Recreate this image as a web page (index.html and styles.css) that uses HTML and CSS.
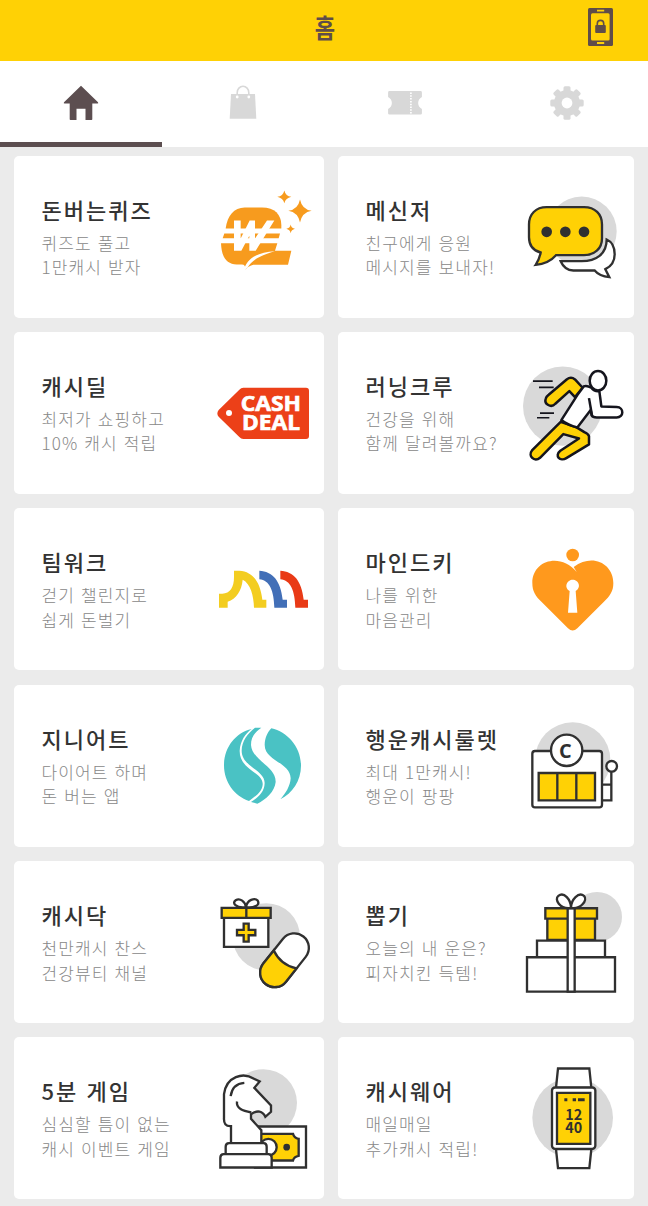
FILE: index.html
```html
<!DOCTYPE html>
<html lang="ko">
<head>
<meta charset="utf-8">
<title>홈</title>
<link rel="stylesheet" href="styles.css">
</head>
<body>
<header class="topbar">
  <h1 class="topbar-title">홈</h1>
  <svg class="phone" viewBox="0 0 25 38">
    <rect width="25" height="38" rx="1.5" fill="#5f4d49"/>
    <rect x="3" y="5.2" width="18.6" height="27.3" rx="1.5" fill="#ffd105"/>
    <path d="M9 2.6h7.2M9 35h7.2" stroke="#ffd105" stroke-width="1.9"/>
    <path d="M9.3 18v-2.4a3.2 3.2 0 0 1 6.4 0V18" fill="none" stroke="#5f4d49" stroke-width="1.6"/>
    <rect x="7.2" y="17" width="10.6" height="8" rx="1" fill="#5f4d49"/>
  </svg>
</header>
<nav class="tabs">
  <a class="tab tab-active"><svg class="tab-icon" viewBox="0 0 36 36"><path fill="#5c4e50" d="M18 .8 1 17.2q-.8 1.2.6 1.3H6.7v15.8q0 .7.8.7h6V23.800h9V35h6q.8 0 .8-.7V18.500h5.100q1.400-.1.6-1.300Z"/></svg></a>
  <a class="tab"><svg class="tab-icon" viewBox="0 0 36 36"><path fill="none" stroke="#d8d8d8" stroke-width="1.6" d="M12.200 12V7.700a5.800 6.500 0 0 1 11.600 0V12"/><path fill="#d8d8d8" d="M6 9h24l1.300 24.700H4.700Z"/><circle cx="12.200" cy="12" r="1.400" fill="#fff"/><circle cx="23.800" cy="12" r="1.400" fill="#fff"/></svg></a>
  <a class="tab"><svg class="tab-icon" viewBox="0 0 36 36"><path fill="#d8d8d8" d="M2.500 6h31q1.400 0 1.400 1.400v4.500c-5 2.500-5 9.500 0 12v4.500q0 1-1.400 1h-31q-1.400 0-1.400-1v-4.500c5-2.500 5-9.500 0-12V7.400Q1.100 6 2.500 6Z"/><path d="M23.900 7.500V30" stroke="#fff" stroke-width="1.700" stroke-dasharray="1.500 1.300"/></svg></a>
  <a class="tab"><svg class="tab-icon" viewBox="-18 -18 36 36"><g fill="#d8d8d8"><circle r="13"/><g id="teeth"><rect x="-3.500" y="-16.700" width="7" height="33.400" rx="1.500"/><rect x="-16.700" y="-3.500" width="33.400" height="7" rx="1.500"/></g><use href="#teeth" transform="rotate(45)"/></g><circle r="5.400" fill="#fff"/></svg></a>
</nav>
<main class="grid">
  <section class="card">
    <div class="copy"><h2 class="title">돈버는퀴즈</h2><p class="desc">퀴즈도 풀고<br>1만캐시 받자</p></div>
    <svg class="art" viewBox="12 -43.5 360 486">
      <g fill="#f79b1e">
        <path d="M134 111H186C224 111 244 132 244 164V174H77C82 136 102 111 134 111Z"/>
        <path d="M73 189H240L236 203H68Z"/>
        <path d="M63 218H232L225 241H274L264 283H160C151 285 143 290 136 297C137 288 134 281 124 282H110C80 280 65 262 63 218Z"/>
        <path d="M253 60Q257 77 274 79 257 83 253 98 249 83 232 79 249 77 253 60Z"/>
        <path d="M300 87Q306 117 335 121 306 126 300 156 294 126 265 121 294 117 300 87Z"/>
        <path d="M272 162Q274 173 285 175 274 178 272 188 270 178 259 175 270 173 272 162Z"/>
      </g>
      <path d="M132 299C138 266 172 244 225 242C187 252 155 268 143 291Z" fill="#fff"/>
      <path d="M102 150H122V204L149 150H165V204L201 150H223L167 241H148V196L124 241H102Z" fill="#fff"/>
    </svg>
  </section>
  <section class="card">
    <div class="copy"><h2 class="title">메신저</h2><p class="desc">친구에게 응원<br>메시지를 보내자!</p></div>
    <svg class="art line" viewBox="12 -73.5 360 486">
      <circle class="disc" cx="215" cy="153" r="105"/>
      <path fill="#fff" d="M152 242H215C258 242 290 221 290 177C306 184 314 201 314 221C314 240 306 256 286 266L298 290C280 288 264 282 254 270H190C174 269 161 263 152 242Z"/>
      <path class="yel" d="M110 80H222C255 80 276 101 276 132V173C276 203 255 224 222 224H138C125 239 106 250 77 253Q88 237 92 216C70 210 57 193 57 170V132C57 101 77 80 110 80Z"/>
      <g fill="#303030" stroke="none"><circle cx="110" cy="154" r="16"/><circle cx="166" cy="154" r="16"/><circle cx="222" cy="154" r="16"/></g>
    </svg>
  </section>

  <section class="card">
    <div class="copy"><h2 class="title">캐시딜</h2><p class="desc">최저가 쇼핑하고<br>10% 캐시 적립</p></div>
    <svg class="art" viewBox="12 -84.3 360 486">
      <path d="M130 83H318Q327 83 327 92V228Q327 237 318 237H130Q123 237 118 231L56 170Q48 160 56 150L118 89Q123 83 130 83Z" fill="#ec4018"/>
      <circle cx="87" cy="159" r="9" fill="#fff"/>
      <text class="tagtext"><tspan x="122" y="154" textLength="181" lengthAdjust="spacingAndGlyphs">CASH</tspan><tspan x="126" y="211" textLength="174" lengthAdjust="spacingAndGlyphs">DEAL</tspan></text>
    </svg>
  </section>
  <section class="card">
    <div class="copy"><h2 class="title">러닝크루</h2><p class="desc">건강을 위해<br>함께 달려볼까요?</p></div>
    <svg class="art run" viewBox="12 -69.3 360 486">
      <circle class="disc" cx="158" cy="153" r="119"/>
      <path d="M69 78H128M87 97H131M90 174H132M81 188H118" stroke-width="5"/>
      <path class="yel" d="M218 98L195 126 178 108 136 146C123 160 102 147 107 131Q108 125 116 119L170 73Q183 63 195 73Z"/>
      <path class="yel" d="M152 200L66 286C53 302 73 323 90 308L160 237 207 250 151 287C132 302 151 321 169 309L237 268V243Q235 236 223 231L200 217Z"/>
      <path fill="#fff" d="M221 94L202 120 154 195Q174 211 202 217L242 165 245 181Q248 187 260 187H320C342 187 343 157 320 156L274 154 268 108Q253 110 244 98 230 90 221 94Z"/>
      <path d="M237 129L246 181"/><ellipse cx="264" cy="77" rx="25" ry="29" fill="#fff"/>
    </svg>
  </section>

  <section class="card">
    <div class="copy"><h2 class="title">팀워크</h2><p class="desc">걷기 챌린지로<br>쉽게 돈벌기</p></div>
    <svg class="art" viewBox="-3 -95.1 360 486">
      <path fill="#f3cd20" d="M42 162H52C75 161 87 144 87 112V93H103C142 95 166 126 172 180H184V204H147C146 169 137 132 113 120C110 153 94 178 68 186V204H42Z"/>
      <path fill="#426fb7" d="M163 93C203 95 227 123 233 180H246V204H208C207 155 194 121 163 119Z"/>
      <path fill="#e93a16" d="M226 93C266 95 290 123 296 180H309V204H271C270 155 257 121 226 119Z"/>
    </svg>
  </section>
  <section class="card">
    <div class="copy"><h2 class="title">마인드키</h2><p class="desc">나를 위한<br>마음관리</p></div>
    <svg class="art" viewBox="-3 -80.1 360 486">
      <circle cx="173" cy="61" r="19" fill="#ff991d"/>
      <path fill="#ff991d" d="M185 112L176 97C233 54 295 88 295 145C295 170 285 184 266 202L187 281Q173 294 159 281L80 202C61 184 52 170 52 145C52 76 137 53 185 112Z"/>
      <path fill="#fff" d="M164 169C145 157 157 135 173 135C190 135 201 157 182 169L187 234H159Z"/>
    </svg>
  </section>

  <section class="card">
    <div class="copy"><h2 class="title">지니어트</h2><p class="desc">다이어트 하며<br>돈 버는 앱</p></div>
    <svg class="art" viewBox="-3 -75.9 360 486">
      <g fill="#4ac2c4">
        <path d="M140 56C91 67 57 112 57 165C57 216 89 258 132 272C151 258 171 245 173 223C176 184 103 181 104 121C106 91 121 70 140 56Z"/>
        <path d="M150 52H169C145 68 138 86 138 104C141 151 213 167 212 215C209 244 184 267 157 280L138 275C158 262 178 247 179 218C178 178 110 169 110 121C110 92 128 70 150 52Z"/>
        <path d="M199 54C248 65 288 110 288 166C288 211 262 249 226 267C242 250 256 226 257 204C255 155 179 152 179 103C180 83 186 68 199 54Z"/>
      </g>
    </svg>
  </section>
  <section class="card">
    <div class="copy"><h2 class="title">행운캐시룰렛</h2><p class="desc">최대 1만캐시!<br>행운이 팡팡</p></div>
    <svg class="art line" viewBox="-3 -75.9 360 486">
      <circle class="disc" cx="173" cy="149" r="113"/>
      <path fill="#fff" d="M262 223H289V270H262M289 185V223"/>
      <rect x="52" y="122" width="209" height="169" rx="8" fill="#fff"/>
      <circle cx="155" cy="120" r="47" fill="#fff"/>
      <circle cx="290" cy="168" r="16" fill="#fff"/>
      <path class="yel" d="M71 188H240V270H71ZM127 188V270M184 188V270"/>
      <text x="132" y="142" class="coin" textLength="38" lengthAdjust="spacingAndGlyphs">C</text>
    </svg>
  </section>

  <section class="card">
    <div class="copy"><h2 class="title">캐시닥</h2><p class="desc">천만캐시 찬스<br>건강뷰티 채널</p></div>
    <svg class="art line" viewBox="-3 -71.7 360 486">
      <circle class="disc" cx="184" cy="156" r="101"/>
      <path fill="#fff" d="M57 99H190V186H57Z"/><path class="yel" d="M50 69H197V99H50Z"/>
      <path fill="#fff" d="M123 67C92 71 80 54 92 46C105 38 121 50 123 67C126 44 150 38 158 47C167 62 145 70 123 67Z"/><path d="M124 66V99"/>
      <path class="yel" d="M116 116H131V135H151V151H131V170H116V151H96V135H116Z"/>
      <g transform="rotate(38.500 238.500 226)"><rect x="195" y="135" width="87" height="182" rx="43.500" fill="#fff"/><path class="yel" d="M195 223Q238 244 282 223V273.500A43.500 43.500 0 0 1 195 273.500Z"/></g>
    </svg>
  </section>
  <section class="card">
    <div class="copy"><h2 class="title">뽑기</h2><p class="desc">오늘의 내 운은?<br>피자치킨 득템!</p></div>
    <svg class="art line" viewBox="-3 -71.7 360 486">
      <circle class="disc" cx="246" cy="96" r="75"/>
      <path fill="#fff" d="M66 167H270V217H66ZM36 217H300V320H36Z"/>
      <path class="yel" d="M97 101H240V165H97ZM91 70H246V101H91Z"/>
      <path fill="#fff" d="M158 70H179V320H158Z"/>
      <path fill="#fff" d="M168 69C134 74 117 43 130 33C147 20 168 44 168 69C168 44 191 20 207 33C219 45 198 74 168 69Z"/>
    </svg>
  </section>

  <section class="card">
    <div class="copy"><h2 class="title">5분 게임</h2><p class="desc">심심할 틈이 없는<br>캐시 이벤트 게임</p></div>
    <svg class="art line" viewBox="-3 -55.5 360 486">
      <circle class="disc" cx="175" cy="142" r="101"/>
      <path fill="#fff" d="M150 213H303V336H150Z"/>
      <path class="yel" d="M150 235H264Q267 248 281 250V301Q267 303 264 315H150Z"/>
      <circle cx="190" cy="275" r="25" fill="#fff"/><circle cx="245" cy="275" r="10" fill="#303030" stroke="none"/>
      <path fill="#fff" d="M78 263V212C62 213 56 204 57 187V116C64 62 115 49 147 70L164 78 148 97 198 150V169L181 184C173 166 157 163 138 176V190L169 224V263Z"/>
      <path d="M77 122Q82 85 118 82M96 138C93 159 113 166 139 171"/>
      <path fill="#fff" d="M72 263H176Q185 263 185 274V296H62V274Q62 263 72 263ZM56 296H190Q200 296 200 307V336H46V307Q46 296 56 296Z"/>
    </svg>
  </section>
  <section class="card">
    <div class="copy"><h2 class="title">캐시웨어</h2><p class="desc">매일매일<br>추가캐시 적립!</p></div>
    <svg class="art line" viewBox="927 -55.5 360 486">
      <circle class="disc" cx="1103" cy="187" r="121"/>
      <path fill="#fff" d="M1059 39H1153L1159 97H1053ZM1053 281H1159L1153 338H1059Z"/>
      <rect x="1041" y="96" width="130" height="184" rx="9" fill="#fff"/>
      <path class="yel" d="M1056 112H1156V265H1056Z"/>
      <path d="M1078 133H1087M1103 133H1113M1119 133H1139" stroke-width="9"/>
      <text class="clock"><tspan x="1106" y="193">12</tspan><tspan x="1106" y="233">40</tspan></text>
    </svg>
  </section>
</main>
</body>
</html>
```
FILE: styles.css
```css
* { box-sizing: border-box; }
body {
  margin: 0;
  height: 1206px;
  overflow: hidden;
  background: #ebebeb;
  font-family: "Noto Sans CJK KR", sans-serif;
}
.topbar {
  height: 61px;
  display: grid;
  grid-template-columns: 1fr auto 1fr;
  align-items: center;
  padding: 0 35px 8px 37px;
  background: #ffd105;
}
.topbar-title {
  grid-column: 2;
  margin: 0;
  font-size: 26px;
  line-height: 30px;
  font-weight: 700;
  color: #5f4d49;
  transform: scaleX(.85);
}
.phone { width: 25px; height: 38px; justify-self: end; }
.tabs {
  height: 86px;
  display: grid;
  grid-template-columns: repeat(4, 1fr);
  background: #fff;
}
.tab {
  display: flex;
  justify-content: center;
  padding-top: 24px;
  border-bottom: 5px solid #fff;
}
.tab-active { border-color: #5c4e50; }
.tab-icon { width: 36px; height: 36px; }
.grid {
  display: grid;
  grid-template-columns: 310px 296px;
  grid-auto-rows: 162px;
  gap: 14.4px 14px;
  padding: 8.5px 14px 0;
}
.card {
  display: flex;
  justify-content: space-between;
  background: #fff;
  border-radius: 5px;
}
.copy { padding: 38px 0 0 27.5px; width: 0; flex: 1; white-space: nowrap; }
.title {
  margin: 0;
  font-size: 22px;
  line-height: 30px;
  font-weight: 500;
  letter-spacing: 2px;
  color: #333;
}
.desc {
  margin: 7px 0 0;
  font-size: 17px;
  line-height: 24.5px;
  font-weight: 300;
  letter-spacing: 1.15px;
  color: #888;
}
.art { width: 120px; height: 162px; flex: none; }
.line, .run { fill: none; stroke: #303030; stroke-width: 7; stroke-linejoin: miter; }
.run { stroke: #15151d; stroke-width: 7.5; stroke-linejoin: round; }
.disc { fill: #d9d9d9; stroke: none; }
.yel { fill: #ffd105; }
.tagtext { fill: #fff; font: 700 62px "Open Sans", sans-serif; stroke: #fff; stroke-width: 2; }
.coin { fill: #303030; stroke: none; font: 700 60px "Open Sans", sans-serif; }
.clock { fill: #303030; stroke: none; font: 700 43px "Noto Sans CJK KR", sans-serif; text-anchor: middle; }
```
